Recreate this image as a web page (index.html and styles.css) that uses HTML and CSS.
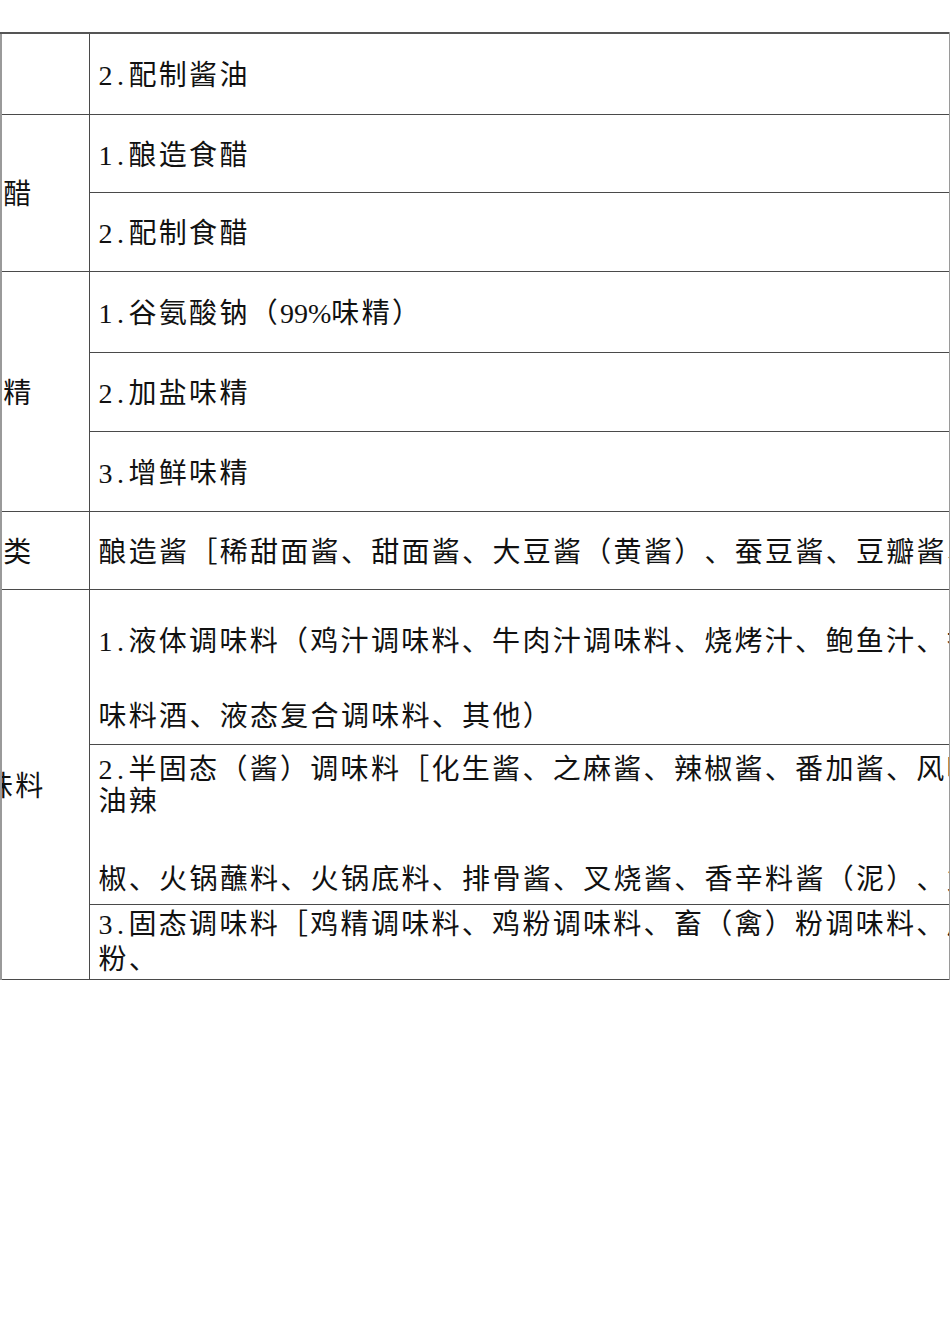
FILE: index.html
```html
<!DOCTYPE html>
<html lang="zh">
<head>
<meta charset="utf-8">
<link rel="stylesheet" href="styles.css">
</head>
<body>
<table class="grid">
  <colgroup><col class="c-cat"><col class="c-item"></colgroup>
  <tr class="h81">
    <td class="cat"></td>
    <td class="item"><span class="num">2.</span>配制酱油</td>
  </tr>
  <tr class="h78">
    <td class="cat" rowspan="2"><span class="cut2">食醋</span></td>
    <td class="item"><span class="num">1.</span>酿造食醋</td>
  </tr>
  <tr class="h79">
    <td class="item"><span class="num">2.</span>配制食醋</td>
  </tr>
  <tr class="h81">
    <td class="cat" rowspan="3"><span class="cut2">味精</span></td>
    <td class="item"><span class="num">1.</span>谷氨酸钠（<span class="lat">99%</span>味精）</td>
  </tr>
  <tr class="h79">
    <td class="item"><span class="num">2.</span>加盐味精</td>
  </tr>
  <tr class="h80">
    <td class="item"><span class="num">3.</span>增鲜味精</td>
  </tr>
  <tr class="h78">
    <td class="cat"><span class="cut2">酱类</span></td>
    <td class="item">酿造酱［稀甜面酱、甜面酱、大豆酱（黄酱）、蚕豆酱、豆瓣酱、其他］</td>
  </tr>
  <tr class="h155">
    <td class="cat" rowspan="3"><span class="cut5">复合调味料</span></td>
    <td class="item top">
      <div class="ln l1a"><span class="num">1.</span>液体调味料（鸡汁调味料、牛肉汁调味料、烧烤汁、鲍鱼汁、香辛料调</div>
      <div class="ln l1b">味料酒、液态复合调味料、其他）</div>
    </td>
  </tr>
  <tr class="h160">
    <td class="item top">
      <div class="ln l2a"><span class="num">2.</span>半固态（酱）调味料［化生酱、之麻酱、辣椒酱、番加酱、风味酱、芥末酱、咖喱卤</div>
      <div class="ln l2b">油辣</div>
      <div class="ln l2c">椒、火锅蘸料、火锅底料、排骨酱、叉烧酱、香辛料酱（泥）、复合调味酱</div>
    </td>
  </tr>
  <tr class="h75">
    <td class="item top">
      <div class="ln l3a"><span class="num">3.</span>固态调味料［鸡精调味料、鸡粉调味料、畜（禽）粉调味料、风味汤料、酱油</div>
      <div class="ln l3b">粉、</div>
    </td>
  </tr>
</table>
</body>
</html>
```
FILE: styles.css
```css
html, body {
  margin: 0;
  padding: 0;
  background: #ffffff;
  overflow: hidden;
}
body {
  width: 950px;
  height: 1344px;
  font-family: "Liberation Serif", "Noto Sans CJK SC", serif;
  font-size: 28px;
  color: #111111;
  text-spacing-trim: space-all;
}
.grid {
  margin-top: 32px;
  width: 949px;
  border-collapse: collapse;
  table-layout: fixed;
}
.c-cat { width: 88px; }
.c-item { width: 861px; }
.grid td {
  border: 1px solid #4a4a4a;
  padding: 5px 0 0 0;
  overflow: hidden;
  white-space: nowrap;
  letter-spacing: 2.3px;
  line-height: 32px;
  vertical-align: middle;
}
.grid td.cat {
  border-left-color: #9a9a9a;
  border-left-width: 2px;
}
.grid td.item {
  padding-left: 9px;
  border-right-color: #9a9a9a;
  border-right-width: 2px;
}
.grid td.top {
  vertical-align: top;
  padding-top: 0;
}
.grid tr:first-child td {
  border-top: 2px solid #555555;
}
.h75 { height: 75px; }
.h78 { height: 78px; }
.h79 { height: 79px; }
.h80 { height: 80px; }
.h81 { height: 81px; }
.h155 { height: 155px; }
.h160 { height: 160px; }
.num {
  letter-spacing: 4.5px;
}
.lat {
  letter-spacing: 0;
}
.cut2 {
  display: block;
  text-indent: -29px;
}
.cut5 {
  display: block;
  text-indent: -108px;
}
.ln {
  height: 32px;
  overflow: hidden;
}
.l1a { margin-top: 36px; }
.l1b { margin-top: 43px; }
.l2a { margin-top: 9px; }
.l2b { margin-top: 0; }
.l2c { margin-top: 46px; }
.l3a { margin-top: 4px; }
.l3b { margin-top: 3px; }
```
